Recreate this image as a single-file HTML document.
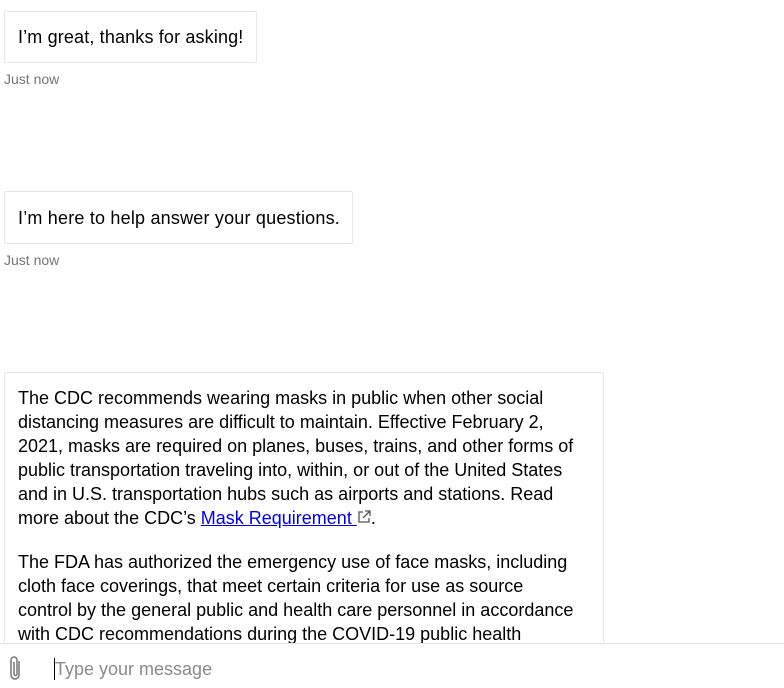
<!DOCTYPE html>
<html><head><meta charset="utf-8"><style>
body{margin:0;width:784px;height:687px;overflow:hidden;background:#fff;font-family:"Liberation Sans",sans-serif;color:#000;position:relative}
.b{position:absolute;left:4px;border:1px solid #e6e6e6;border-radius:2px;background:#fff;box-sizing:border-box;font-size:18px;line-height:24px;padding:0 13px;white-space:nowrap}
.t{position:absolute;left:4px;font-size:14px;color:#767676}
a{color:#0000ee}
.in{position:absolute;left:0;top:643px;width:784px;height:44px;border-top:1px solid #e6e6e6;background:#fff}
</style></head><body>
<div class="b" style="top:11px;width:253px;height:52px;padding-top:13px;letter-spacing:0.15px">I’m great, thanks for asking!</div>
<div class="t" style="top:71px">Just now</div>
<div class="b" style="top:191px;width:349px;height:53px;padding-top:14px;letter-spacing:0.2px">I’m here to help answer your questions.</div>
<div class="t" style="top:252px">Just now</div>
<div class="b" style="top:372px;width:600px;height:300px;padding-top:13px">
<div>The CDC recommends wearing masks in public when other social<br>distancing measures are difficult to maintain. Effective February 2,<br>2021, masks are required on planes, buses, trains, and other forms of<br>public transportation traveling into, within, or out of the United States<br>and in U.S. transportation hubs such as airports and stations. Read<br>more about the CDC’s <a href="#">Mask Requirement </a> <svg width="14" height="14" viewBox="0 0 14 14" style="vertical-align:0px"><path d="M6 2H2v10h10V8M8 1h5v5M13 1L6 8" fill="none" stroke="#555" stroke-width="1.3"/></svg>.</div>
<div style="margin-top:20px">The FDA has authorized the emergency use of face masks, including<br>cloth face coverings, that meet certain criteria for use as source<br>control by the general public and health care personnel in accordance<br>with CDC recommendations during the COVID-19 public health<br>emergency.</div>
</div>
<div class="in">
<svg style="position:absolute;left:9px;top:11px" width="14" height="26" viewBox="0 0 14 26"><path d="M10 6v14a4 4 0 0 1-8 0V5a3 3 0 0 1 6 0v14a1.5 1.5 0 0 1-3 0V7" fill="none" stroke="#777" stroke-width="1.5"/></svg>
<div style="position:absolute;left:54px;top:14px;width:1px;height:22px;background:#000"></div>
<div style="position:absolute;left:55px;top:15px;font-size:18px;color:#8a8a8a">Type your message</div>
</div>
</body></html>
